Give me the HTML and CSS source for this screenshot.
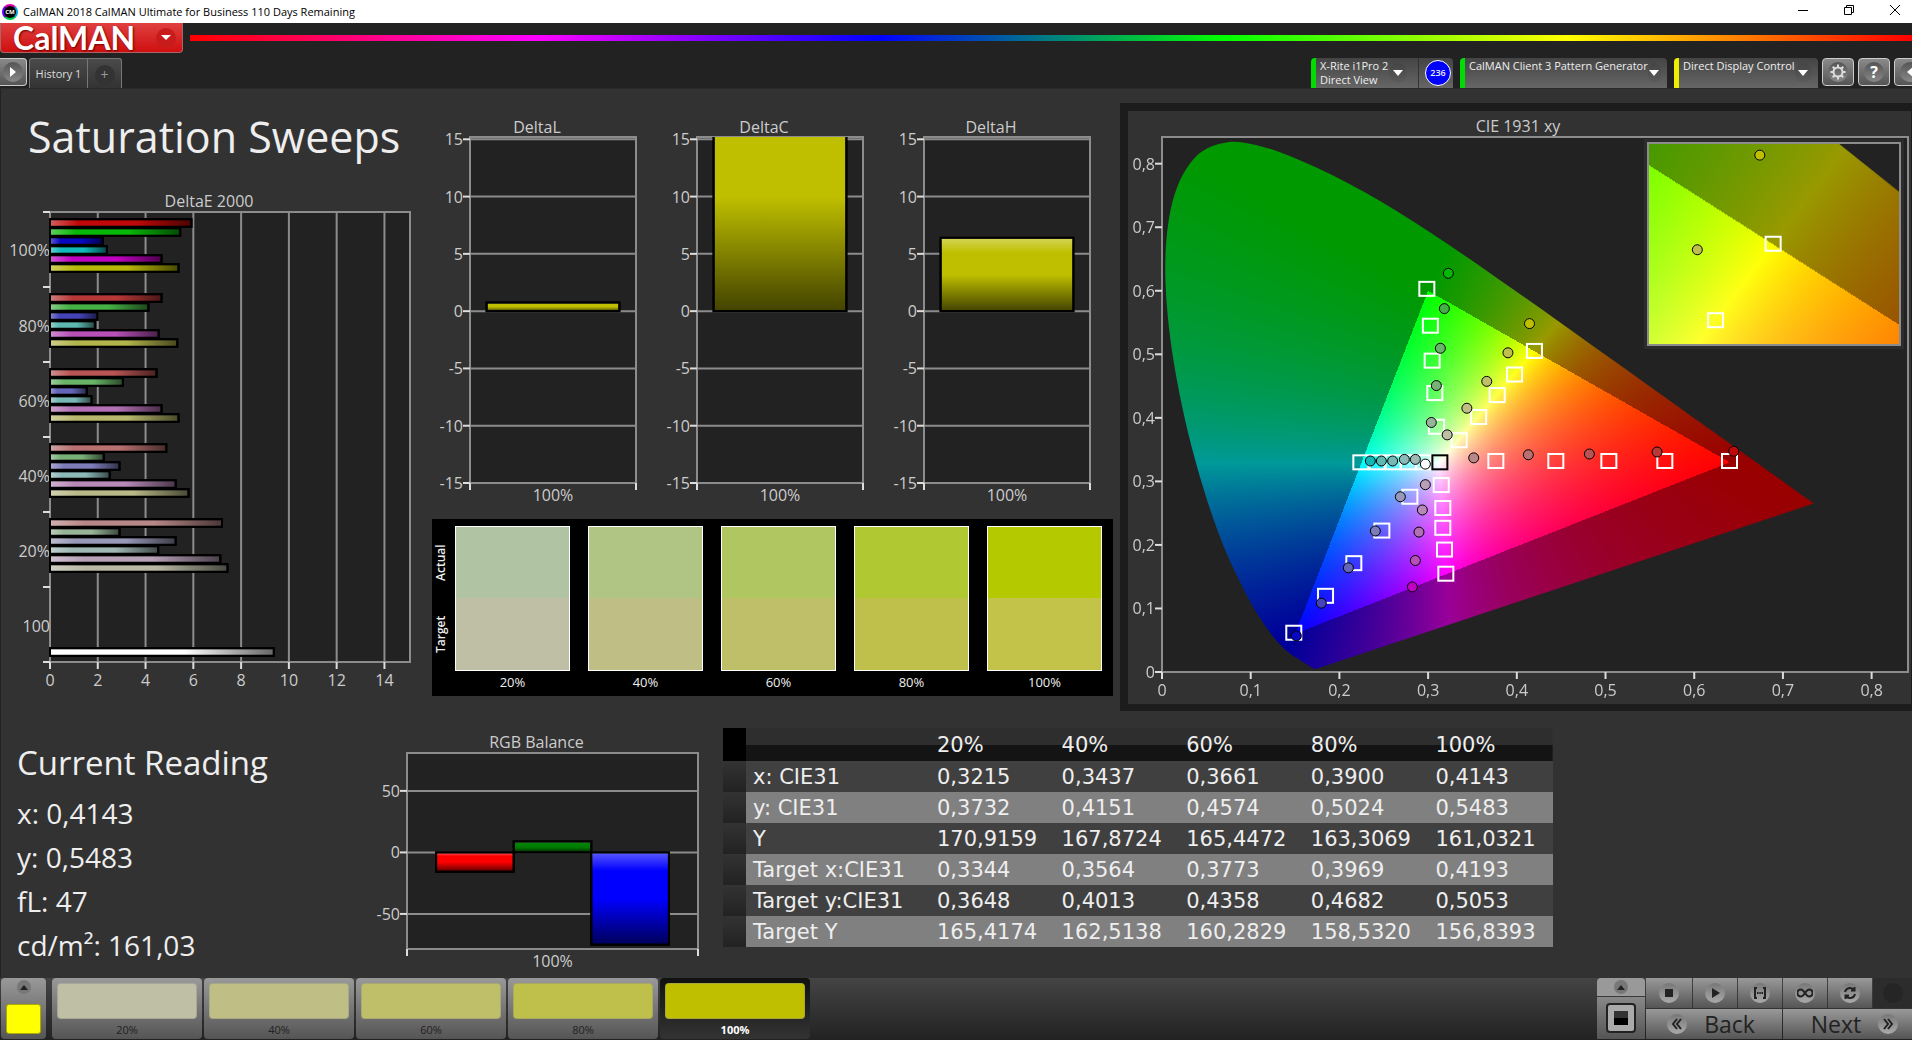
FILE: index.html
```html
<!DOCTYPE html>
<html lang="en">
  <head>
    <meta charset="UTF-8" />
    <meta name="viewport" content="width=device-width, initial-scale=1.0" />
    <title>CalMAN 2018</title>
    <link rel="stylesheet" href="styles.css">
  </head>
  <body>
    <header class="titlebar">
      <span class="app-icon">CM</span>
      <span class="app-title">CalMAN 2018 CalMAN Ultimate for Business 110 Days Remaining</span>
      <button class="win-btn" aria-label="Minimize"><svg width="12" height="12"><path d="M1 6.5h10" /></svg></button>
      <button class="win-btn" aria-label="Restore"><svg width="12" height="12"><path d="M1.5 3.5h7v7h-7zM3.5 3.500v-2h7v7h-2" /></svg></button>
      <button class="win-btn" aria-label="Close"><svg width="12" height="12"><path d="M1 1l10 10M11 1l-10 10" /></svg></button>
    </header>

    <div class="brand-row">
      <button class="brand">CalMAN <span class="brand-arrow"><svg width="10" height="6"><path d="M0 0h10l-5 5z" /></svg></span></button>
      <div class="rainbow"></div>
    </div>

    <nav class="toolbar">
      <button class="tool-btn first" aria-label="Show panel"><span class="dimple"><svg width="6" height="10"><path d="M0 0l6 5l-6 5z" /></svg></span></button>
      <div class="tabs">
        <button class="tab">History 1</button>
        <button class="tab-add" aria-label="Add tab"><span>+</span></button>
      </div>
      <div class="devices">
        <div class="device meter">
          <span class="device-name">X-Rite i1Pro 2<br />Direct View</span>
          <button class="drop" aria-label="Meter menu"><svg width="10" height="6"><path d="M0 0h10l-5 6z" /></svg></button>
          <span class="meter-count"><b>236</b></span>
        </div>
        <div class="device source">
          <span class="device-name">CalMAN Client 3 Pattern Generator</span>
          <button class="drop" aria-label="Source menu"><svg width="10" height="6"><path d="M0 0h10l-5 6z" /></svg></button>
        </div>
        <div class="device display">
          <span class="device-name">Direct Display Control</span>
          <button class="drop" aria-label="Display menu"><svg width="10" height="6"><path d="M0 0h10l-5 6z" /></svg></button>
        </div>
      </div>
      <div class="tool-btns">
        <button class="tool-btn" aria-label="Settings"><span class="dimple"><svg class="gear" width="16" height="16" viewBox="0 0 16 16"><circle cx="8" cy="8" r="4.500" /><path d="M8 .5v3M8 12.500v3M.5 8h3M12.500 8h3M2.700 2.700l2.100 2.100M11.200 11.200l2.100 2.100M2.700 13.300l2.100-2.100M11.200 4.800l2.100-2.100" /></svg></span></button>
        <button class="tool-btn" aria-label="Help"><span class="dimple">?</span></button>
        <button class="tool-btn" aria-label="Hide panel"><span class="dimple"><svg width="6" height="10"><path d="M6 0l-6 5l6 5z" /></svg></span></button>
      </div>
    </nav>

    <main>
      <div class="top">
        <section class="sweeps">
          <h1>Saturation Sweeps</h1>
          <div class="chart delta-e">
            <h2>DeltaE 2000</h2>
            <svg class="plot" id="deltaE"></svg>
          </div>
        </section>

        <section class="deltas">
          <div class="delta-row">
            <div class="chart"><h2>DeltaL</h2><svg class="plot" id="deltaL"></svg></div>
            <div class="chart"><h2>DeltaC</h2><svg class="plot" id="deltaC"></svg></div>
            <div class="chart"><h2>DeltaH</h2><svg class="plot" id="deltaH"></svg></div>
          </div>
          <div class="compare">
            <div class="compare-side"><span>Target</span><span>Actual</span></div>
            <figure><div class="patch a20"></div><figcaption>20%</figcaption></figure>
            <figure><div class="patch a40"></div><figcaption>40%</figcaption></figure>
            <figure><div class="patch a60"></div><figcaption>60%</figcaption></figure>
            <figure><div class="patch a80"></div><figcaption>80%</figcaption></figure>
            <figure><div class="patch a100"></div><figcaption>100%</figcaption></figure>
          </div>
        </section>

        <section class="cie">
          <h2>CIE 1931 xy</h2>
          <div class="cie-plot">
            <canvas id="cieCanvas"></canvas>
            <svg class="overlay" id="ciePoints"></svg>
            <div class="inset">
              <canvas id="insetCanvas"></canvas>
              <svg class="overlay" id="insetPoints"></svg>
            </div>
          </div>
        </section>
      </div>

      <div class="bottom">
        <section class="reading">
          <h2>Current Reading</h2>
          <p>x: 0,4143</p>
          <p>y: 0,5483</p>
          <p>fL: 47</p>
          <p>cd/m²: 161,03</p>
        </section>

        <div class="chart rgb">
          <h2>RGB Balance</h2>
          <svg class="plot" id="rgb"></svg>
        </div>

        <table class="data">
          <colgroup><col class="c-gutter" /><col class="c-label" /><col /><col /><col /><col /><col /></colgroup>
          <thead>
            <tr><td></td><td></td><th>20%</th><th>40%</th><th>60%</th><th>80%</th><th>100%</th></tr>
          </thead>
          <tbody>
            <tr><td></td><th>x: CIE31</th><td>0,3215</td><td>0,3437</td><td>0,3661</td><td>0,3900</td><td>0,4143</td></tr>
            <tr><td></td><th>y: CIE31</th><td>0,3732</td><td>0,4151</td><td>0,4574</td><td>0,5024</td><td>0,5483</td></tr>
            <tr><td></td><th>Y</th><td>170,9159</td><td>167,8724</td><td>165,4472</td><td>163,3069</td><td>161,0321</td></tr>
            <tr><td></td><th>Target x:CIE31</th><td>0,3344</td><td>0,3564</td><td>0,3773</td><td>0,3969</td><td>0,4193</td></tr>
            <tr><td></td><th>Target y:CIE31</th><td>0,3648</td><td>0,4013</td><td>0,4358</td><td>0,4682</td><td>0,5053</td></tr>
            <tr><td></td><th>Target Y</th><td>165,4174</td><td>162,5138</td><td>160,2829</td><td>158,5320</td><td>156,8393</td></tr>
          </tbody>
        </table>
      </div>
    </main>

    <footer>
      <button class="current" aria-label="Current colour"><span class="up"><svg width="8" height="5"><path d="M0 5l4-5l4 5z" /></svg></span><span class="current-color"></span></button>
      <div class="levels">
        <button class="level"><span class="chip c20"></span>20%</button>
        <button class="level"><span class="chip c40"></span>40%</button>
        <button class="level"><span class="chip c60"></span>60%</button>
        <button class="level"><span class="chip c80"></span>80%</button>
        <button class="level selected"><span class="chip c100"></span>100%</button>
      </div>
      <div class="pattern">
        <button class="pattern-up" aria-label="Open patterns"><span class="up"><svg width="8" height="5"><path d="M0 5l4-5l4 5z" /></svg></span></button>
        <button class="pattern-window" aria-label="Window pattern"><span></span></button>
      </div>
      <div class="controls">
        <div class="controls-row">
          <button aria-label="Stop"><span class="knob"><svg width="8" height="8"><path d="M0 0h8v8h-8z" /></svg></span></button>
          <button aria-label="Play"><span class="knob"><svg width="9" height="10"><path d="M1 0l8 5l-8 5z" /></svg></span></button>
          <button aria-label="Read series"><span class="knob"><svg class="line" width="14" height="12"><path d="M4 1h-2v10h2M10 1h2v10h-2M4 6h1.500M6.300 6h1.500M8.500 6h1.500" /></svg></span></button>
          <button aria-label="Read continuously"><span class="knob"><svg class="line" width="16" height="10"><path d="M8 5c-2-3-3-3.500-4.200-3.500a3 3 0 0 0 0 7c1.200 0 2.200-.5 4.200-3.500s3-3.500 4.200-3.500a3 3 0 0 1 0 7c-1.200 0-2.200-.5-4.200-3.500" /></svg></span></button>
          <button aria-label="Repeat"><span class="knob"><svg class="line" width="14" height="14"><path d="M2 6a5 5 0 0 1 8.500-2.500M12 8a5 5 0 0 1-8.500 2.500M11.500 1v3.500h-3.500M2.500 13v-3.500h3.500" /></svg></span></button>
          <span class="blank"><span class="knob"></span></span>
        </div>
        <div class="controls-row">
          <button class="wide"><span class="knob"><svg class="line" width="12" height="12"><path d="M6 1l-4 5l4 5M10 1l-4 5l4 5" /></svg></span>Back</button>
          <button class="wide next">Next<span class="knob"><svg class="line" width="12" height="12"><path d="M2 1l4 5l-4 5M6 1l4 5l-4 5" /></svg></span></button>
        </div>
      </div>
    </footer>

    <!-- shading shared by all chart bars -->
    <svg class="defs" width="0" height="0">
      <defs>
        <linearGradient id="shadeV" x1="0" y1="0" x2="0" y2="1">
          <stop offset="0" stop-color="#fff" stop-opacity="0.35" />
          <stop offset="0.2" stop-color="#fff" stop-opacity="0" />
          <stop offset="0.5" stop-color="#000" stop-opacity="0" />
          <stop offset="1" stop-color="#000" stop-opacity="0.65" />
        </linearGradient>
        <linearGradient id="shadeH" x1="0" y1="0" x2="1" y2="0">
          <stop offset="0" stop-color="#fff" stop-opacity="0.35" />
          <stop offset="0.2" stop-color="#fff" stop-opacity="0" />
          <stop offset="0.6" stop-color="#000" stop-opacity="0" />
          <stop offset="1" stop-color="#000" stop-opacity="0.6" />
        </linearGradient>
      </defs>
    </svg>

    <script src="charts.js"></script>
  </body>
</html>
```

FILE: styles.css
```css
* {
  box-sizing: border-box;
}

body {
  display: flex;
  flex-direction: column;
  min-height: 100vh;
  margin: 0;
  overflow-x: hidden;
  background: #222;
  color: #eee;
  font-family: "Open Sans", "Noto Sans", sans-serif;
  font-size: 12px;
}

h1, h2, p, figure {
  margin: 0;
  font-weight: normal;
}

button {
  padding: 0;
  border: none;
  font-family: inherit;
  font-size: 12px;
  color: inherit;
}

/* window title */
.titlebar {
  display: flex;
  align-items: center;
  height: 23px;
  background: #fff;
  color: #000;
}

.app-icon {
  width: 16px;
  height: 16px;
  margin: 0 5px 0 2px;
  border: 2px solid #0af;
  border-color: #d0a #0ad #0c4 #60f;
  border-radius: 50%;
  background: #000;
  color: #fff;
  font-size: 6px;
  font-weight: bold;
  line-height: 12px;
  text-align: center;
}

.app-title {
  flex: 1;
  font-size: 11px;
}

.win-btn {
  width: 46px;
  height: 20px;
  padding-left: 12px;
  background: none;
}

.win-btn svg {
  fill: none;
  stroke: #000;
}

/* brand */
.brand-row {
  display: flex;
  height: 35px;
}

.brand {
  display: flex;
  align-items: center;
  justify-content: space-between;
  width: 183px;
  height: 30px;
  margin-right: 7px;
  padding: 0 6px 0 12px;
  border: 1px solid #a66;
  border-top: none;
  border-radius: 0 0 4px 4px;
  background: linear-gradient(#e04040, #cf0f0f);
  color: #fff;
  font-family: Lato, sans-serif;
  font-size: 32px;
  font-weight: bold;
  line-height: 28px;
  text-shadow: 1px 1px 2px #600;
}

.brand-arrow {
  display: flex;
  align-items: center;
  justify-content: center;
  width: 20px;
  height: 20px;
  border-radius: 50%;
  background: #c81c1c;
}

.brand-arrow svg {
  fill: #fff;
}

.rainbow {
  flex: 1;
  height: 6px;
  margin-top: 12px;
  background: linear-gradient(to right, #f00, #f0f, #00f, #0f0, #ff0, #f00);
}

/* tabs and devices */
.toolbar {
  display: flex;
  height: 31px;
  border-bottom: 1px solid #2a2a2a;
}

.tool-btn {
  flex: none;
  width: 32px;
  height: 28px;
  border: 1px solid #ccc;
  border-radius: 4px;
  background: linear-gradient(#8a8a8a, #555);
}

.tool-btn.first {
  width: 27px;
  margin-right: 2px;
  border-left: none;
  border-radius: 0 4px 4px 0;
}

.dimple {
  display: flex;
  align-items: center;
  justify-content: center;
  width: 20px;
  height: 20px;
  margin: auto;
  border-radius: 50%;
  background: linear-gradient(#555, #888);
  color: #fff;
  font-size: 16px;
  font-weight: bold;
}

.dimple svg {
  fill: #fff;
}

.dimple .gear {
  fill: none;
  stroke: #ddd;
  stroke-width: 2;
}

.tabs {
  display: flex;
  border: 1px solid #777;
  border-bottom: none;
  border-radius: 3px 3px 0 0;
  background: linear-gradient(#4a4a4a, #333);
}

.tab {
  width: 58px;
  border-right: 1px solid #777;
  background: none;
  color: #ddd;
  font-size: 11px;
}

.tab-add {
  width: 33px;
  background: none;
  color: #999;
}

.tab-add span {
  display: block;
  width: 20px;
  margin: 3px auto 0;
  border-radius: 50%;
  background: #333;
  font-size: 14px;
  line-height: 20px;
}

.devices {
  display: flex;
  gap: 7px;
  margin-left: auto;
}

.device {
  display: flex;
  align-items: center;
  justify-content: space-between;
  border-left: 5px solid #0d0;
  border-radius: 4px 4px 0 0;
  background: linear-gradient(#444, #666);
}

.meter {
  width: 142px;
}

.source {
  width: 207px;
}

.display {
  width: 144px;
  border-left-color: #ee0;
}

.device-name {
  align-self: flex-start;
  flex: 1;
  padding: 1px 0 0 4px;
  font-size: 11px;
  line-height: 14px;
  white-space: nowrap;
}

.drop {
  display: flex;
  align-items: center;
  justify-content: center;
  width: 18px;
  height: 20px;
  margin-right: 6px;
  border-radius: 50%;
  background: linear-gradient(#444, #5c5c5c);
}

.meter .drop {
  margin-right: 11px;
}

.drop svg {
  fill: #fff;
}

.meter-count {
  display: flex;
  align-items: center;
  align-self: stretch;
  width: 35px;
  padding-left: 6px;
  border-left: 1px solid #333;
}

.meter-count b {
  width: 26px;
  height: 26px;
  border: 1px solid #fff;
  border-radius: 50%;
  background: #00f;
  font-size: 9px;
  font-weight: 600;
  line-height: 24px;
  text-align: center;
}

.tool-btns {
  display: flex;
  gap: 4px;
  width: 94px;
  padding-left: 4px;
}

/* workspace */
main {
  display: flex;
  flex: 1;
  flex-direction: column;
  border-left: 1px solid #222;
  background: #323232;
}

.top {
  display: grid;
  flex: 1;
  grid-template-columns: minmax(0, 431fr) minmax(0, 688fr) minmax(0, 792fr);
}

.bottom {
  display: grid;
  min-height: 267px;
  grid-template-columns: minmax(0, 374fr) minmax(0, 348fr) minmax(0, 830fr) minmax(0, 359fr);
}

.chart {
  display: flex;
  flex-direction: column;
}

.chart h2,
.cie h2 {
  color: #ccc;
  font-size: 16px;
  line-height: 20px;
  text-align: center;
}

.plot {
  flex: 1;
  width: calc(100% - 32px);
  height: 0;
  min-height: 120px;
  margin-left: 32px;
  overflow: visible;
}

.frame {
  fill: #222;
  stroke: #8c8c8c;
  stroke-width: 2;
}

.grid {
  stroke: #8c8c8c;
  stroke-width: 2;
}

.tick {
  stroke: #ddd;
  stroke-width: 2;
}

.tick-label {
  fill: #ccc;
  font-size: 16px;
}

.bar {
  stroke: #000;
  stroke-width: 2;
}

.sweeps {
  display: flex;
  flex-direction: column;
  padding: 23px 22px 49px 7px;
}

h1 {
  margin: 0 0 29px 20px;
  font-size: 43px;
  line-height: 50px;
  white-space: nowrap;
}

.delta-e {
  flex: 1;
}

.delta-e h2 {
  margin-bottom: 1px;
}

.delta-e .plot {
  width: calc(100% - 42px);
  margin-left: 42px;
}

.deltas {
  display: flex;
  flex-direction: column;
  padding: 28px 7px 15px 0;
}

.delta-row {
  display: grid;
  flex: 1;
  grid-template-columns: repeat(3, minmax(0, 1fr));
  margin-bottom: 36px;
}

.delta-row .chart {
  padding: 0 23px 0 6px;
}

/* actual and target patches */
.compare {
  display: flex;
  gap: 18px;
  height: 177px;
  padding: 7px 11px 0 0;
  background: #000;
}

.compare-side {
  display: flex;
  width: 17px;
  height: 145px;
  margin-right: -12px;
  writing-mode: vertical-rl;
  transform: rotate(180deg);
}

.compare-side span {
  flex: 1;
  font-weight: 600;
  line-height: 18px;
  text-align: center;
}

.compare figure {
  flex: 1;
  font-size: 13px;
  line-height: 16px;
  text-align: center;
}

.patch {
  height: 145px;
  margin-bottom: 3px;
  border: 1px solid #fff;
}

.a20 { background: linear-gradient(#b0c4a4 50%, #bfbfa5 50%); }
.a40 { background: linear-gradient(#b0c583 50%, #bfbf85 50%); }
.a60 { background: linear-gradient(#b0c761 50%, #bfbf69 50%); }
.a80 { background: linear-gradient(#b0c832 50%, #bfbf4b 50%); }
.a100 { background: linear-gradient(#b5c900 50%, #c3c34a 50%); }

/* chromaticity diagram */
.cie {
  display: flex;
  flex-direction: column;
  margin-top: 14px;
  padding: 5px 3px 32px 34px;
  border: solid #1c1c1c;
  border-width: 8px 1px 7px 8px;
}

.cie h2 {
  margin-right: 34px;
  margin-bottom: 1px;
}

.cie-plot {
  position: relative;
  flex: 1;
}

.cie-plot canvas,
.overlay {
  position: absolute;
  inset: 0;
  width: 100%;
  height: 100%;
  overflow: visible;
}

.cie-frame {
  fill: none;
  stroke: #8c8c8c;
  stroke-width: 2;
}

.target {
  fill: none;
  stroke: #fff;
  stroke-width: 2;
}

.target.white-point {
  stroke: #000;
}

.measured {
  stroke: #000;
  stroke-width: 1;
}

.inset {
  position: absolute;
  top: 1%;
  right: 1%;
  width: 34%;
  height: 38%;
  border: 2px solid #8c8c8c;
  outline: 3px solid #2c2c2c;
}

.inset .overlay {
  overflow: hidden;
}

/* readings */
.reading {
  padding: 32px 0 0 16px;
  font-size: 28px;
  line-height: 44px;
}

.reading h2 {
  margin-bottom: 8px;
  font-size: 33px;
  line-height: 40px;
}

.rgb {
  padding: 21px 25px 29px 0;
}

.rgb h2 {
  margin-bottom: 1px;
}

.data {
  align-self: start;
  width: 100%;
  margin-top: 17px;
  border-collapse: collapse;
  table-layout: fixed;
  font-family: "DejaVu Sans", sans-serif;
  font-size: 21px;
}

.c-gutter {
  width: 23px;
}

.c-label {
  width: 184px;
}

.data th,
.data td {
  height: 31px;
  padding: 0 0 0 7px;
  font-weight: normal;
  line-height: 30px;
  text-align: left;
  white-space: nowrap;
}

.data thead tr {
  background: linear-gradient(#2e2e2e 50%, #141414 50%);
}

.data thead th {
  height: 33px;
}

.data tbody tr {
  background: #404040;
}

.data tbody tr:nth-child(even) {
  background: #808080;
}

.data thead td:first-child {
  background: #000;
}

.data tbody td:first-child {
  background: linear-gradient(#333, #222);
}

/* bottom bar */
footer {
  display: flex;
  height: 62px;
  padding-left: 1px;
  background: linear-gradient(#444, #222);
}

footer button {
  background: linear-gradient(#999, #555);
  color: #222;
}

.current {
  display: flex;
  flex-direction: column;
  align-items: center;
  width: 45px;
  height: 61px;
  margin-right: 6px;
  border-radius: 4px;
}

.up {
  display: flex;
  align-items: center;
  justify-content: center;
  width: 14px;
  height: 14px;
  margin-top: 2px;
  border-radius: 50%;
  background: #777;
}

.up svg {
  fill: #222;
}

.current-color {
  width: 35px;
  height: 30px;
  margin-top: 10px;
  border: 1px solid #aa0;
  border-radius: 3px;
  background: #ff0;
}

.levels {
  display: flex;
  gap: 2px;
}

.level {
  width: 150px;
  height: 61px;
  padding: 3px 5px 0;
  border-radius: 4px;
  font-size: 11px;
}

.chip {
  display: block;
  height: 36px;
  margin-bottom: 3px;
  border: 1px solid #8886;
  border-radius: 4px;
}

.c20 { background: #bfbfa5; }
.c40 { background: #bfbf85; }
.c60 { background: #bfbf69; }
.c80 { background: #bfbf4b; }
.c100 { background: #bfbf00; }

footer .level.selected {
  background: linear-gradient(#111, #333);
  color: #fff;
  font-weight: bold;
}

.pattern {
  display: flex;
  flex-direction: column;
  gap: 1px;
  width: 48px;
  height: 61px;
  margin-left: auto;
}

.pattern-up {
  display: flex;
  justify-content: center;
  height: 18px;
  border-radius: 4px 4px 0 0;
}

footer .pattern-up {
  background: #999;
}

footer .pattern-window {
  display: flex;
  flex: 1;
  align-items: center;
  justify-content: center;
  background: linear-gradient(#888, #555);
}

.pattern-window span {
  width: 30px;
  height: 30px;
  border: 2px solid #222;
  border-radius: 4px;
  background: linear-gradient(#333 50%, #000 50%) center / 14px 14px no-repeat #aaa;
}

.controls {
  display: flex;
  flex-direction: column;
  gap: 1px;
  width: 266px;
  height: 61px;
  margin-left: 1px;
}

.controls-row {
  display: grid;
  flex: 1;
  gap: 1px;
  grid-template-columns: 46px repeat(4, 44px) 1fr;
}

.controls-row button,
.blank {
  display: flex;
  align-items: center;
  justify-content: center;
}

.blank {
  background: #2c2c2c;
}

.knob {
  display: flex;
  align-items: center;
  justify-content: center;
  width: 20px;
  height: 20px;
  border-radius: 50%;
  background: linear-gradient(#777, #aaa);
}

.blank .knob {
  background: #252525;
}

.knob svg {
  fill: #222;
}

.knob .line {
  fill: none;
  stroke: #222;
  stroke-width: 2;
}

.controls-row .wide {
  grid-column: span 3;
  gap: 17px;
  padding-right: 6px;
  font-size: 23px;
  line-height: 30px;
}

.controls-row .next {
  padding: 0 0 0 14px;
}

.defs {
  position: absolute;
}
```

FILE: charts.js
```js
const SVG = 'http://www.w3.org/2000/svg';

function add(parent, name, attrs, text) {
  const node = document.createElementNS(SVG, name);
  for (const key in attrs) node.setAttribute(key, attrs[key]);
  if (text !== undefined) node.textContent = text;
  parent.appendChild(node);
  return node;
}

function pct(n) {
  return n + '%';
}

function bar(parent, x, y, w, h, color, shade) {
  const box = { x: pct(x), y: pct(y), width: pct(w), height: pct(h) };
  add(parent, 'rect', { ...box, class: 'bar', fill: color });
  add(parent, 'rect', { ...box, fill: 'url(#' + shade + ')' });
  add(parent, 'rect', { ...box, class: 'bar', fill: 'none' });
}

function tickLeft(svg, y, label) {
  const g = add(svg, 'svg', { x: -7, y: pct(y), overflow: 'visible' });
  add(g, 'line', { x1: 0, x2: 7, class: 'tick' });
  if (label !== undefined) {
    add(svg, 'text', { x: 0, dx: -7, y: pct(y), dy: 6, 'text-anchor': 'end', class: 'tick-label' }, label);
  }
}

function tickBottom(svg, x) {
  const g = add(svg, 'svg', { x: pct(x), y: '100%', overflow: 'visible' });
  add(g, 'line', { y1: 0, y2: 7, class: 'tick' });
}

/* vertical bar charts */
function columnChart(id, min, max, steps, bars) {
  const svg = document.getElementById(id);
  const pos = v => (max - v) / (max - min) * 100;
  add(svg, 'rect', { width: '100%', height: '100%', class: 'frame' });
  steps.forEach(v => {
    add(svg, 'line', { x1: 0, x2: '100%', y1: pct(pos(v)), y2: pct(pos(v)), class: 'grid' });
    tickLeft(svg, pos(v), v);
  });
  const area = add(svg, 'svg', { width: '100%', height: '100%' });
  const w = 80 / bars.length;
  bars.forEach(([value, color], i) => {
    const top = pos(Math.max(value, 0));
    const bottom = pos(Math.min(value, 0));
    bar(area, 10 + i * w, top, w, bottom - top, color, 'shadeV');
  });
  tickBottom(svg, 0);
  tickBottom(svg, 100);
  add(svg, 'text', { x: '50%', y: '100%', dy: 18, 'text-anchor': 'middle', class: 'tick-label' }, '100%');
}

const deltaSteps = [15, 10, 5, 0, -5, -10, -15];
columnChart('deltaL', -15, 15.2, deltaSteps, [[0.75, '#bfbf00']]);
columnChart('deltaC', -15, 15.2, deltaSteps, [[20, '#bfbf00']]);
columnChart('deltaH', -15, 15.2, deltaSteps, [[6.4, '#bfbf00']]);
columnChart('rgb', -78.5, 80.8, [50, 0, -50], [[-15.7, '#f00'], [8.9, '#008000'], [-75, '#00f']]);

/* DeltaE: six colours per saturation level */
const levels = [
  ['100%', [5.92, 5.45, 2.21, 2.38, 4.67, 5.38], ['#c00808', '#08b808', '#0808c0', '#10b8b8', '#c000c0', '#b8b808']],
  ['80%', [4.67, 4.12, 1.99, 1.88, 4.55, 5.33], ['#b83838', '#45b045', '#4444b8', '#5cb8b0', '#b850b8', '#b4b44c']],
  ['60%', [4.46, 3.05, 1.54, 1.74, 4.67, 5.38], ['#b85454', '#68b468', '#6464b8', '#78b8b4', '#b470b4', '#b8b86c']],
  ['40%', [4.87, 2.25, 2.91, 2.5, 5.26, 5.8], ['#b87070', '#78b078', '#7c7cb8', '#8cb8b8', '#b888b8', '#b8b888']],
  ['20%', [7.2, 2.91, 5.26, 4.53, 7.13, 7.43], ['#b88888', '#98b498', '#9898b8', '#a0b8b4', '#b8a0b8', '#b8b8a4']],
  ['100', [0, 0, 0, 0, 0, 0, 9.37], ['', '', '', '', '', '', '#fff']]
];

function deltaEChart() {
  const svg = document.getElementById('deltaE');
  const max = 15.07;
  add(svg, 'rect', { width: '100%', height: '100%', class: 'frame' });
  for (let v = 0; v < max; v += 2) {
    const x = pct(v / max * 100);
    if (v) add(svg, 'line', { x1: x, x2: x, y1: 0, y2: '100%', class: 'grid' });
    tickBottom(svg, v / max * 100);
    add(svg, 'text', { x: x, y: '100%', dy: 24, 'text-anchor': 'middle', class: 'tick-label' }, v);
  }
  const band = 100 / levels.length;
  levels.forEach(([label, values, colors], i) => {
    tickLeft(svg, i * band);
    add(svg, 'text', { x: 0, y: pct((i + 0.5) * band), dy: 7, 'text-anchor': 'end', class: 'tick-label' }, label);
    values.forEach((v, n) => {
      if (v) bar(svg, 0, i * band + 1.6 + n * 2, v / max * 100, 1.7, colors[n], 'shadeH');
    });
  });
  tickLeft(svg, 100);
}
deltaEChart();

/* CIE 1931 spectral locus */
const locus = [
  [.1741, .0050], [.1714, .0051], [.1689, .0069], [.1644, .0109], [.1566, .0177], [.1510, .0227], [.1440, .0297],
  [.1355, .0399], [.1241, .0578], [.1096, .0868], [.0913, .1327], [.0687, .2007], [.0454, .2950], [.0235, .4127],
  [.0082, .5384], [.0039, .6548], [.0139, .7502], [.0389, .8120], [.0743, .8338], [.1142, .8262], [.1547, .8059],
  [.1929, .7816], [.2296, .7543], [.2658, .7243], [.3016, .6923], [.3373, .6589], [.3731, .6245], [.4087, .5896],
  [.4441, .5547], [.4788, .5202], [.5125, .4866], [.5448, .4544], [.5752, .4242], [.6029, .3965], [.6270, .3725],
  [.6482, .3514], [.6658, .3340], [.6915, .3083], [.7079, .2920], [.7190, .2809], [.7347, .2653]
];

function color(x, y) {
  const X = x / y, Z = (1 - x - y) / y;
  const rgb = [
    3.2406 * X - 1.5372 - 0.4986 * Z,
    -0.9689 * X + 1.8758 + 0.0415 * Z,
    0.0557 * X - 0.2040 + 1.0570 * Z
  ];
  const inside = Math.min(...rgb) >= 0;
  const max = Math.max(...rgb);
  return rgb.map(c => Math.max(c, 0) / max * (inside ? 255 : 153));
}

function drawGamut(canvas, view) {
  const w = canvas.width = canvas.clientWidth;
  const h = canvas.height = canvas.clientHeight;
  const ctx = canvas.getContext('2d');
  const img = ctx.createImageData(w, h);
  for (let j = 0; j < h; j++) {
    const y = view.y1 - (j + 0.5) / h * (view.y1 - view.y0);
    for (let i = 0; i < w; i++) {
      const x = view.x0 + (i + 0.5) / w * (view.x1 - view.x0);
      const rgb = color(x, y);
      const k = (j * w + i) * 4;
      img.data[k] = rgb[0];
      img.data[k + 1] = rgb[1];
      img.data[k + 2] = rgb[2];
      img.data[k + 3] = 255;
    }
  }
  ctx.putImageData(img, 0, 0);

  // keep only what lies inside the locus, a smooth curve through all its points
  const last = locus.length - 1;
  const px = i => {
    const p = locus[Math.min(Math.max(i, 0), last)];
    return [(p[0] - view.x0) / (view.x1 - view.x0) * w, (view.y1 - p[1]) / (view.y1 - view.y0) * h];
  };
  ctx.globalCompositeOperation = 'destination-in';
  ctx.beginPath();
  ctx.moveTo(...px(0));
  for (let i = 0; i < last; i++) {
    const a = px(i - 1), b = px(i), c = px(i + 1), d = px(i + 2);
    ctx.bezierCurveTo(
      b[0] + (c[0] - a[0]) / 6, b[1] + (c[1] - a[1]) / 6,
      c[0] - (d[0] - b[0]) / 6, c[1] - (d[1] - b[1]) / 6,
      c[0], c[1]
    );
  }
  ctx.closePath();
  ctx.fill();
  ctx.globalCompositeOperation = 'destination-over';
  ctx.fillStyle = '#222';
  ctx.fillRect(0, 0, w, h);
}

const targets = [
  [.298, .603], [.302, .545], [.304, .49], [.307, .439], [.309, .386],
  [.2236, .33], [.242, .33], [.26, .33], [.2773, .33], [.2946, .33],
  [.2789, .2758], [.2473, .2226], [.2157, .1713], [.1838, .1199], [.148, .0618],
  [.3142, .2942], [.316, .2581], [.316, .2269], [.3179, .1927], [.3194, .1547],
  [.3344, .3648], [.3564, .4013], [.3773, .4358], [.3969, .4682], [.4193, .5053],
  [.3758, .3321], [.4434, .3321], [.5032, .3321], [.5663, .3321], [.6392, .3321]
];

const measured = [
  [.3228, .6275, '#08b808'], [.3183, .5719, '#45b045'], [.3138, .5095, '#68b468'], [.3093, .4508, '#78b078'], [.3036, .3927, '#98b498'],
  [.2349, .3321, '#10b8b8'], [.2473, .3321, '#5cb8b0'], [.26, .3321, '#78b8b4'], [.2732, .3346, '#8cb8b8'], [.2856, .3346, '#a0b8b4'],
  [.2969, .3272, '#fff'],
  [.2687, .2758, '#9898b8'], [.2405, .222, '#7c7cb8'], [.2101, .1639, '#6464b8'], [.1796, .1083, '#4444b8'], [.1514, .0569, '#0808c0'],
  [.2969, .2948, '#b8a0b8'], [.2935, .255, '#b888b8'], [.2897, .2202, '#b470b4'], [.2856, .1755, '#b850b8'], [.2822, .1339, '#c000c0'],
  [.3215, .3732, '#bfbfa5'], [.3437, .4151, '#bfbf85'], [.3661, .4574, '#bfbf69'], [.39, .5024, '#bfbf4b'], [.4143, .5483, '#bfbf00'],
  [.3514, .337, '#b88888'], [.413, .3419, '#b87070'], [.4818, .3431, '#b85454'], [.5581, .3462, '#b83838'], [.6445, .3474, '#c00808']
];

function drawPoints(svg, view) {
  const fx = x => (x - view.x0) / (view.x1 - view.x0) * 100;
  const fy = y => (view.y1 - y) / (view.y1 - view.y0) * 100;
  const square = (p, cls) => {
    const g = add(svg, 'svg', { x: pct(fx(p[0])), y: pct(fy(p[1])), overflow: 'visible' });
    add(g, 'rect', { x: -7, y: -7, width: 15, height: 14, class: cls });
  };
  const shown = p => p[0] > view.x0 && p[0] < view.x1 && p[1] > view.y0 && p[1] < view.y1;
  targets.filter(shown).forEach(p => square(p, 'target'));
  if (shown([.3127, .33])) square([.3127, .33], 'target white-point');
  measured.filter(shown).forEach(p => {
    add(svg, 'ellipse', { cx: pct(fx(p[0])), cy: pct(fy(p[1])), rx: 5, ry: 5, class: 'measured', fill: p[2] });
  });
}

const full = { x0: 0, x1: 0.841, y0: 0, y1: 0.842 };
const zoomed = { x0: 0.3712, x1: 0.4683, y0: 0.457, y1: 0.5537 };

const points = document.getElementById('ciePoints');
add(points, 'rect', { width: '100%', height: '100%', class: 'cie-frame' });
for (let i = 0; i <= 8; i++) {
  const label = i ? '0,' + i : '0';
  const at = i / 10 / 0.841 * 100;
  tickBottom(points, at);
  add(points, 'text', { x: pct(at), y: '100%', dy: 24, 'text-anchor': 'middle', class: 'tick-label' }, label);
  tickLeft(points, 100 - i / 10 / 0.842 * 100, label);
}
drawPoints(points, full);
drawPoints(document.getElementById('insetPoints'), zoomed);

function drawCie() {
  drawGamut(document.getElementById('cieCanvas'), full);
  drawGamut(document.getElementById('insetCanvas'), zoomed);
}
drawCie();
window.addEventListener('resize', drawCie);
```
